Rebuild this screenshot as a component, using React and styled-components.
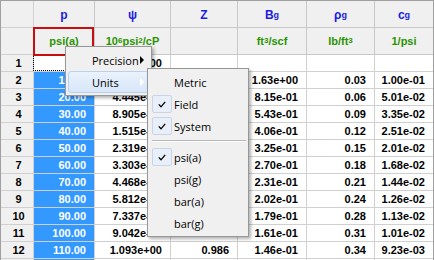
import React from "react";
import styled, { createGlobalStyle } from "styled-components";

const GlobalStyle = createGlobalStyle`
  body {
    margin: 0;
    background: #fff;
    font-family: "Liberation Sans", Arial, sans-serif;
  }
`;

const COLS = "33px 61px 76px 67px 69px 68px 58px";

const Frame = styled.div`
  position: relative;
  width: 434px;
  height: 260px;
  box-sizing: border-box;
  border: 1px solid #a0a0a0;
  border-bottom: none;
  overflow: hidden;
  font: bold 11px "Liberation Sans", Arial, sans-serif;
`;

const Row = styled.div`
  display: grid;
  grid-template-columns: ${COLS};
  height: ${(p) => p.$h}px;
`;

const Cell = styled.div`
  position: relative;
  box-sizing: border-box;
  display: flex;
  align-items: center;
  justify-content: ${(p) => (p.$right ? "flex-end" : "center")};
  padding-right: ${(p) => (p.$right ? 8 : 0)}px;
  border-right: 1px solid #d0d0d0;
  border-bottom: 1px solid #d0d0d0;
  background: #fff;
  color: #000;
  white-space: nowrap;
  &:last-child {
    border-right: none;
  }
`;

const HeadCell = styled(Cell)`
  background: #f0f0f0;
  border-color: #c8c8c8;
  font-size: ${(p) => (p.$unit ? 11 : 12)}px;
  color: ${(p) => (p.$unit ? "#2a9400" : "#1c1ce0")};
  padding-top: ${(p) => (p.$unit ? 0 : 1)}px;
  ${(p) =>
    p.$marked &&
    `
    &::after {
      content: "";
      position: absolute;
      left: -1px;
      top: -1px;
      right: 0;
      bottom: -2px;
      border: 2px solid #c80f0f;
      z-index: 2;
    }
  `}
`;

const RowNum = styled(Cell)`
  background: #f0f0f0;
  padding-left: 3px;
`;

const DataCell = styled(Cell)`
  background: ${(p) => (p.$selected ? "#3399ff" : "#fff")};
  color: ${(p) => (p.$selected ? "#fff" : "#000")};
  ${(p) =>
    p.$focus &&
    `
    &::after {
      content: "";
      position: absolute;
      left: -1px;
      top: -1px;
      right: 0;
      bottom: 0;
      border: 1px dotted #000;
    }
  `}
`;

const Sub = styled.sub`
  font-size: 9px;
  vertical-align: -3px;
  line-height: 0;
`;

const Sup = styled.sup`
  font-size: 8px;
  vertical-align: 4px;
  line-height: 0;
`;

const Menu = styled.div`
  position: absolute;
  left: ${(p) => p.$x}px;
  top: ${(p) => p.$y}px;
  width: ${(p) => p.$w}px;
  box-sizing: border-box;
  padding: 2px;
  background: #f0f0f0;
  border: 1px solid #979797;
  box-shadow: 2px 2px 3px rgba(0, 0, 0, 0.3);
  font: 11px "Open Sans", "Liberation Sans", sans-serif;
  color: #000;
  z-index: ${(p) => p.$z};
`;

const Item = styled.div`
  position: relative;
  display: flex;
  align-items: center;
  height: 22px;
  box-sizing: border-box;
  padding-left: 23px;
  border: 1px solid ${(p) => (p.$active ? "#b9d1ee" : "transparent")};
  border-radius: 3px;
  background: ${(p) =>
    p.$active ? "linear-gradient(#eaf2fc, #d7e6f8)" : "transparent"};
`;

const Arrow = styled.span`
  position: absolute;
  right: 4px;
  top: 50%;
  margin-top: -4px;
  border-left: 4px solid ${(p) => p.$color};
  border-top: 4px solid transparent;
  border-bottom: 4px solid transparent;
`;

const CheckBox = styled.span`
  position: absolute;
  left: 1px;
  top: 1px;
  width: 20px;
  height: 18px;
  box-sizing: border-box;
  border: 1px solid #c6d5ea;
  border-radius: 2px;
  background: #e9eff8;
  display: flex;
  align-items: center;
  justify-content: center;
`;

const Separator = styled.div`
  margin: 3px 0 4px 2px;
  border-top: 1px solid #b8b8b8;
  border-bottom: 1px solid #fff;
`;

const headers = [
  "",
  "p",
  "ψ",
  "Z",
  <>B<Sub>g</Sub></>,
  <>ρ<Sub>g</Sub></>,
  <>c<Sub>g</Sub></>,
];

const units = [
  "",
  "psi(a)",
  <>10<Sup>6</Sup>psi<Sup>2</Sup>/cP</>,
  "",
  <>ft<Sup>3</Sup>/scf</>,
  <>lb/ft<Sup>3</Sup></>,
  "1/psi",
];

const rows = [
  ["1", "", "0.000e+00", "", "", "", ""],
  ["2", "10.00", "1.112e-02", "0.999", "1.63e+00", "0.03", "1.00e-01"],
  ["3", "20.00", "4.445e-02", "0.997", "8.15e-01", "0.06", "5.01e-02"],
  ["4", "30.00", "8.905e-02", "0.996", "5.43e-01", "0.09", "3.35e-02"],
  ["5", "40.00", "1.515e-01", "0.995", "4.06e-01", "0.12", "2.51e-02"],
  ["6", "50.00", "2.319e-01", "0.994", "3.25e-01", "0.15", "2.01e-02"],
  ["7", "60.00", "3.303e-01", "0.992", "2.70e-01", "0.18", "1.68e-02"],
  ["8", "70.00", "4.468e-01", "0.991", "2.31e-01", "0.21", "1.44e-02"],
  ["9", "80.00", "5.812e-01", "0.990", "2.02e-01", "0.24", "1.26e-02"],
  ["10", "90.00", "7.337e-01", "0.989", "1.79e-01", "0.28", "1.13e-02"],
  ["11", "100.00", "9.042e-01", "0.987", "1.61e-01", "0.31", "1.01e-02"],
  ["12", "110.00", "1.093e+00", "0.986", "1.46e-01", "0.34", "9.23e-03"],
  // only the top edge of the next row shows
  ["", "", "", "", "", "", ""],
];

const unitItems = [
  { label: "Metric" },
  { label: "Field", checked: true },
  { label: "System", checked: true },
  { sep: true },
  { label: "psi(a)", checked: true },
  { label: "psi(g)" },
  { label: "bar(a)" },
  { label: "bar(g)" },
];

function Check() {
  return (
    <svg width="8" height="7" viewBox="0 0 8 7">
      <polyline points="0.8,3.4 3,5.8 7.2,0.8" fill="none" stroke="#000" strokeWidth="1.3" />
    </svg>
  );
}

export default function App() {
  return (
    <>
      <GlobalStyle />
      <Frame>
        <Row $h={27}>
          {headers.map((h, i) => (i === 0 ? <RowNum key={i} /> : <HeadCell key={i}>{h}</HeadCell>))}
        </Row>
        <Row $h={27}>
          {units.map((u, i) =>
            i === 0 ? (
              <RowNum key={i} />
            ) : (
              <HeadCell key={i} $unit $marked={i === 1}>
                {u}
              </HeadCell>
            )
          )}
        </Row>
        {rows.map((r, idx) => (
          <Row $h={17} key={idx}>
            <RowNum>{r[0]}</RowNum>
            {r.slice(1).map((v, i) => (
              <DataCell
                key={i}
                $right
                $selected={i === 0 && idx > 0}
                $focus={i === 0 && idx === 0}
              >
                {v}
              </DataCell>
            ))}
          </Row>
        ))}

        <Menu $x={64} $y={45} $w={87} $z={5}>
          <Item>
            Precision
            <Arrow $color="#000" />
          </Item>
          <Item $active>
            Units
            <Arrow $color="#fff" />
          </Item>
        </Menu>

        <Menu $x={146} $y={67} $w={102} $z={6}>
          {unitItems.map((it, i) =>
            it.sep ? (
              <Separator key={i} />
            ) : (
              <Item key={i}>
                {it.checked && (
                  <CheckBox>
                    <Check />
                  </CheckBox>
                )}
                {it.label}
              </Item>
            )
          )}
        </Menu>
      </Frame>
    </>
  );
}
